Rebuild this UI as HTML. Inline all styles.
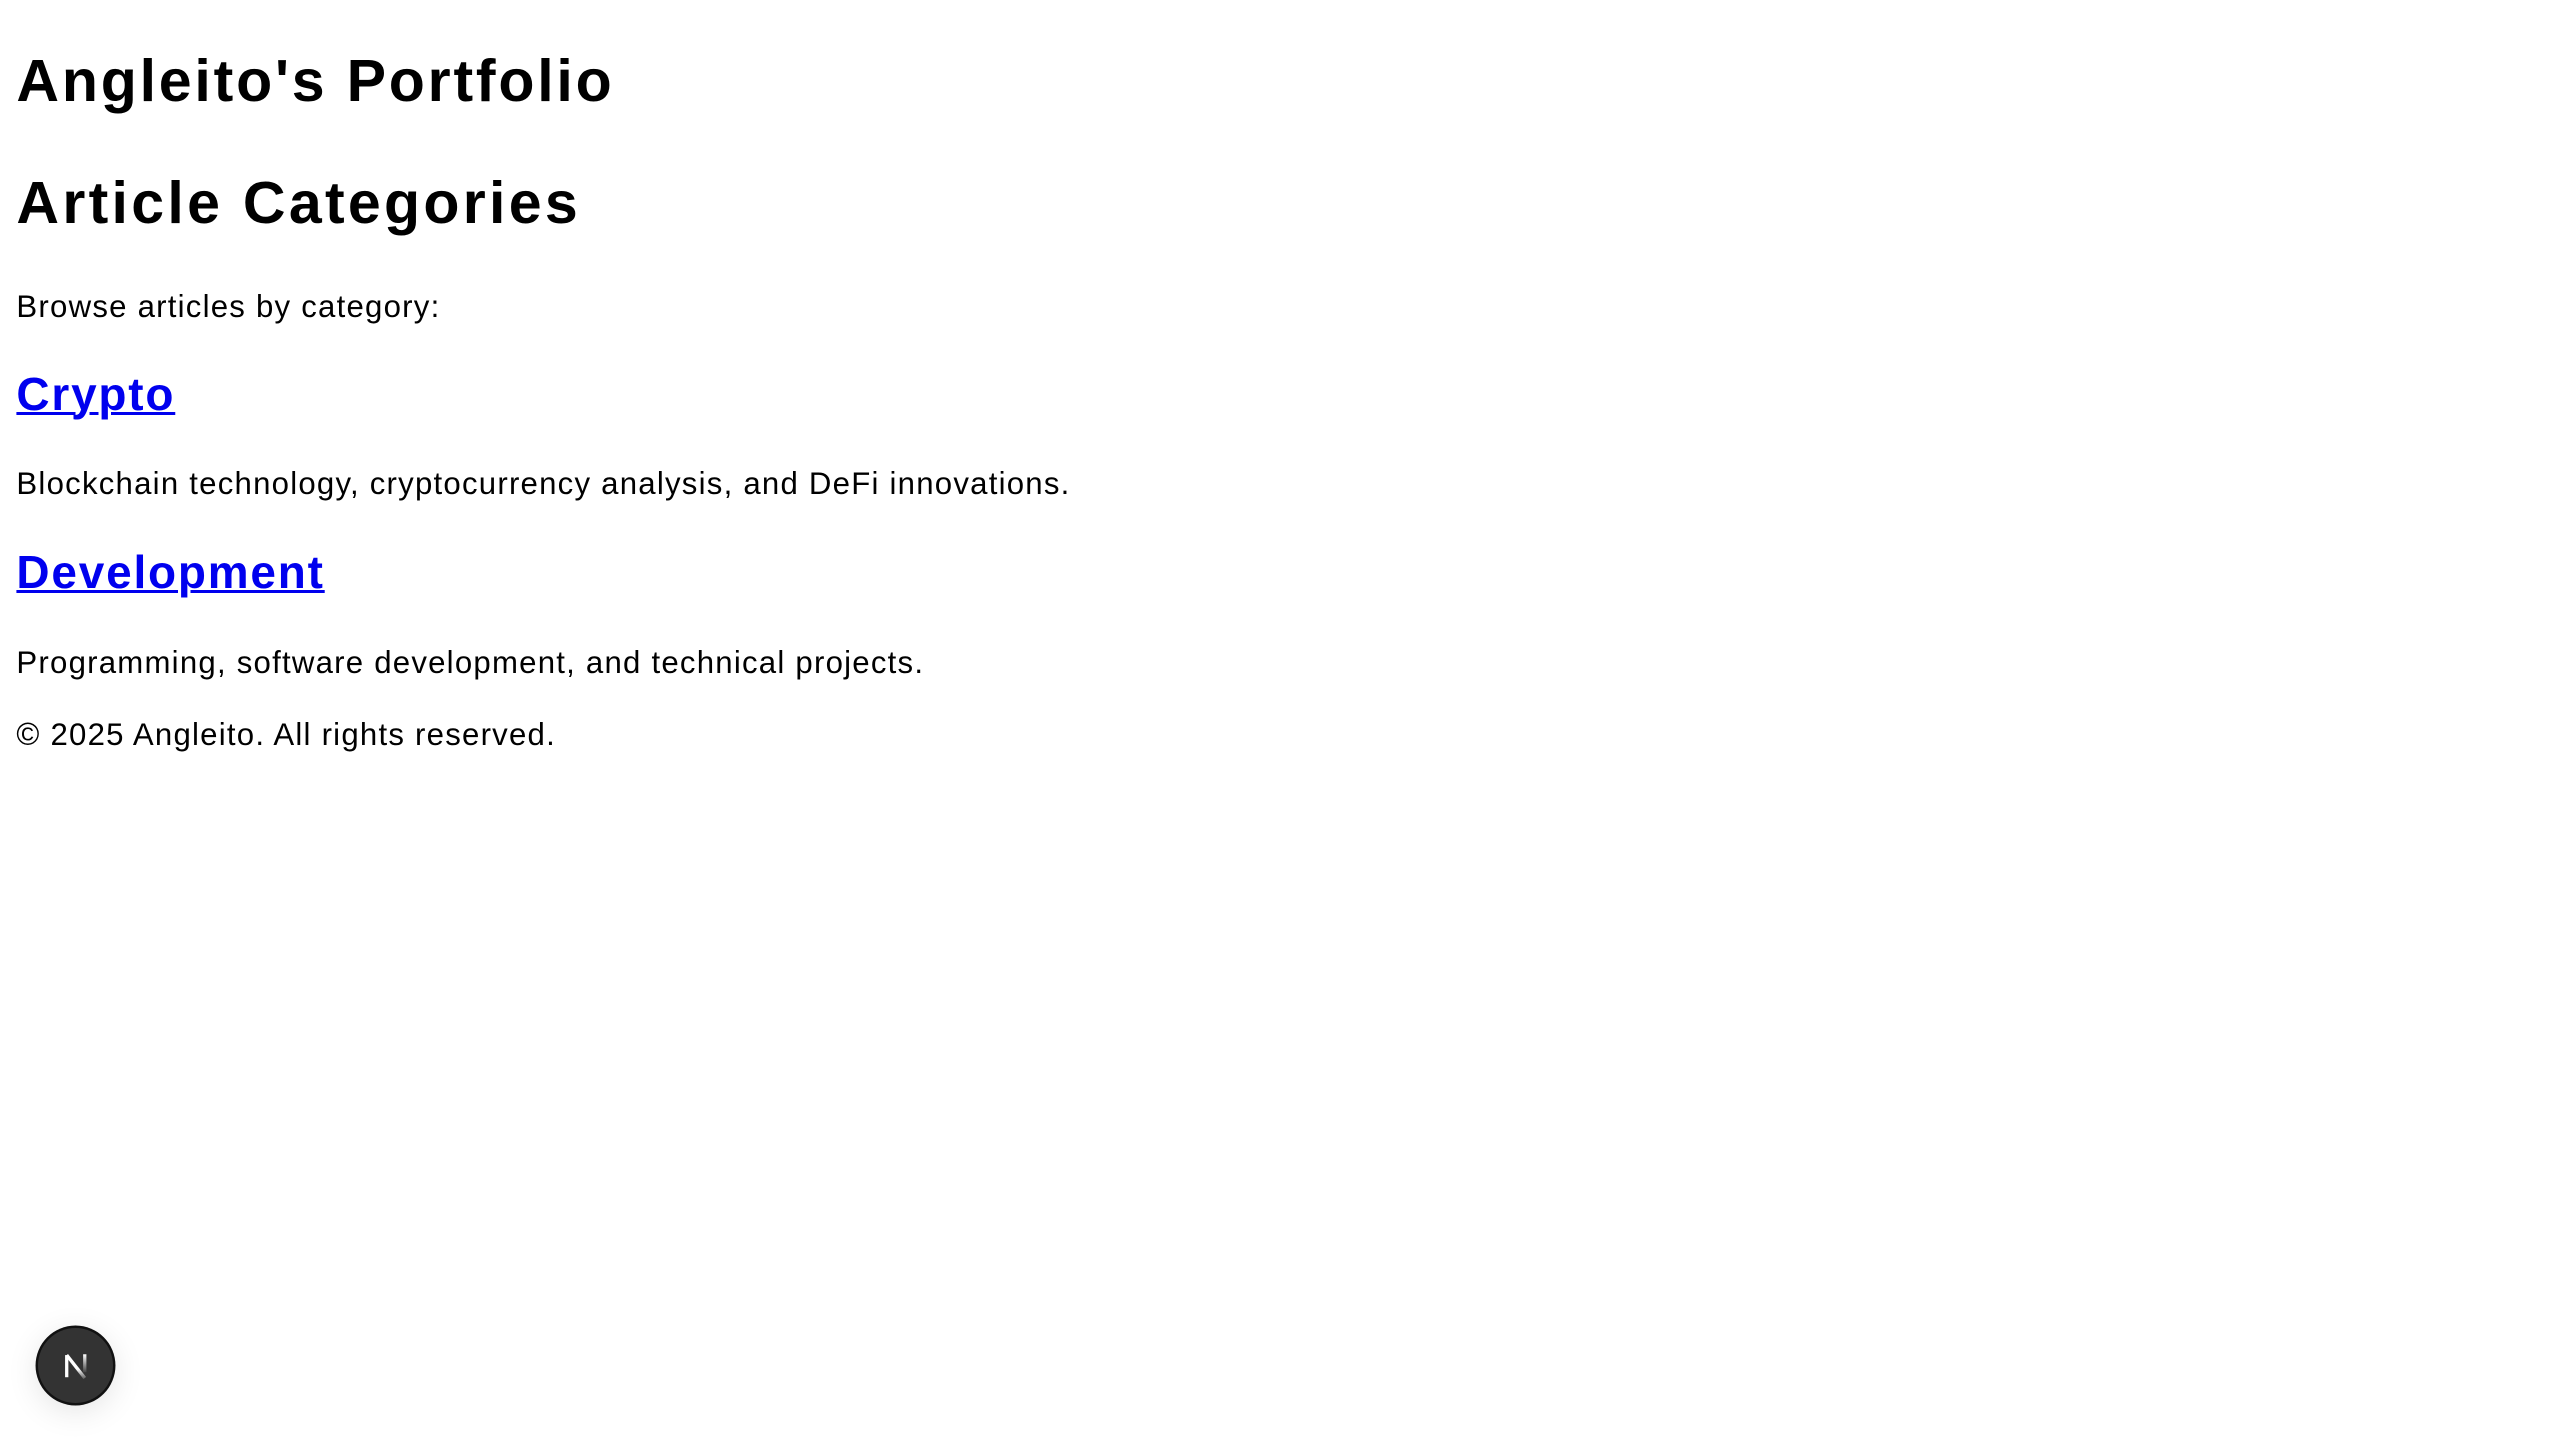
<!DOCTYPE html>
<html><head><meta charset="utf-8"><style>
html,body{margin:0;padding:0;background:#fff;}
body{zoom:1.641;width:1560px;height:878px;position:relative;overflow:hidden;font-family:"Liberation Sans",Arial,sans-serif;color:#000;}
.e{position:absolute;left:10px;margin:0;white-space:nowrap;}
.t{font-weight:bold;font-size:36px;line-height:40px;letter-spacing:1.7px;}
.t2{letter-spacing:2px;}
.h2{font-weight:bold;font-size:28px;line-height:32px;letter-spacing:1.1px;}
.h2 a{color:#0000ee;text-decoration:underline;text-decoration-thickness:2px;}
.p{font-size:19px;line-height:22px;letter-spacing:0.75px;}
.n{position:absolute;left:23px;top:809px;width:46px;height:46px;border-radius:50%;background:#333;box-shadow:0 0 0 1.5px #111,0 4px 20px rgba(0,0,0,.12);}
</style></head><body>
<h1 class="e t" style="top:30px">Angleito's Portfolio</h1>
<h1 class="e t t2" style="top:104px">Article Categories</h1>
<p class="e p" style="top:176px">Browse articles by category:</p>
<h2 class="e h2" style="top:224px"><a>Crypto</a></h2>
<p class="e p" style="top:284px">Blockchain technology, cryptocurrency analysis, and DeFi innovations.</p>
<h2 class="e h2" style="top:333px"><a>Development</a></h2>
<p class="e p" style="top:393px">Programming, software development, and technical projects.</p>
<p class="e p" style="top:437px">© 2025 Angleito. All rights reserved.</p>
<div class="n"><svg width="46" height="46" viewBox="0 0 46 46"><defs><linearGradient id="g" gradientUnits="userSpaceOnUse" x1="0" y1="16" x2="0" y2="28"><stop offset="0" stop-color="#fff"/><stop offset="1" stop-color="#fff" stop-opacity="0"/></linearGradient><linearGradient id="h" gradientUnits="userSpaceOnUse" x1="0" y1="16" x2="0" y2="31"><stop offset="0.6" stop-color="#fff"/><stop offset="1" stop-color="#fff" stop-opacity="0.2"/></linearGradient></defs><path d="M17.5 30V16.5" stroke="#fff" stroke-width="2" fill="none"/><path d="M17.5 16.5L28.5 30.5" stroke="url(#h)" stroke-width="2" fill="none"/><path d="M28.5 16v11" stroke="url(#g)" stroke-width="2"/></svg></div>
</body></html>
